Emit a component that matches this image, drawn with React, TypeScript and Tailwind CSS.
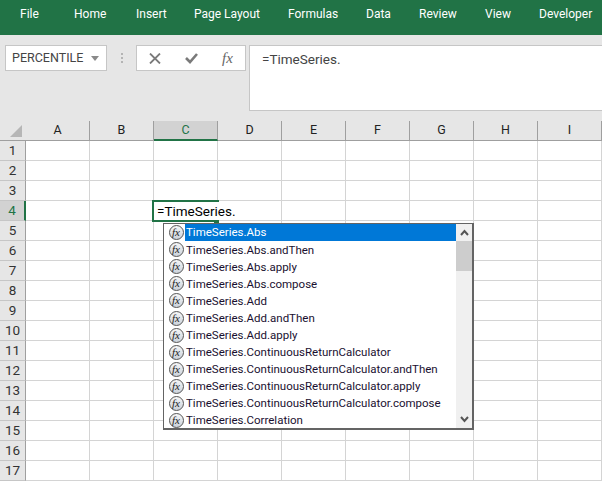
const tabs = [
  { label: 'File', width: 'w-[54px]' },
  { label: 'Home', width: 'w-[62px]' },
  { label: 'Insert', width: 'w-[58px]' },
  { label: 'Page Layout', width: 'w-[94px]' },
  { label: 'Formulas', width: 'w-[78px]' },
  { label: 'Data', width: 'w-[53px]' },
  { label: 'Review', width: 'w-[66px]' },
  { label: 'View', width: 'w-[54px]' },
  { label: 'Developer', width: 'w-[53px]' },
]
const columns = ['A', 'B', 'C', 'D', 'E', 'F', 'G', 'H', 'I']
const rows = Array.from({ length: 17 }, (_, i) => i + 1)
const suggestions = [
  'TimeSeries.Abs',
  'TimeSeries.Abs.andThen',
  'TimeSeries.Abs.apply',
  'TimeSeries.Abs.compose',
  'TimeSeries.Add',
  'TimeSeries.Add.andThen',
  'TimeSeries.Add.apply',
  'TimeSeries.ContinuousReturnCalculator',
  'TimeSeries.ContinuousReturnCalculator.andThen',
  'TimeSeries.ContinuousReturnCalculator.apply',
  'TimeSeries.ContinuousReturnCalculator.compose',
  'TimeSeries.Correlation',
]

function FxBadge() {
  return (
    <div className="flex h-[15px] w-[15px] shrink-0 items-center justify-center rounded-full border border-[#555] bg-gradient-to-b from-[#f6f6f6] to-[#cbd2da] pr-px font-['Liberation_Serif',serif] text-[11px] leading-none text-[#222] italic">
      fx
    </div>
  )
}

function Ribbon() {
  return (
    <div className="flex h-[86px] items-start bg-[#e6e6e6] pt-[10px] pl-[5px]">
      <div className="flex h-[26px] w-[102px] items-center border border-[#c6c6c6] bg-white pr-[7px] pl-[6px] text-[12.5px] text-[#444]">
        <span className="flex-1">PERCENTILE</span>
        <svg width="8" height="5" viewBox="0 0 8 5">
          <path d="M0 0h8L4 5z" fill="#8a8a8a" />
        </svg>
      </div>
      <div className="ml-[14px] flex h-[26px] w-[3px] flex-col justify-center gap-[2px]">
        <div className="h-[2px] w-[2px] bg-[#b4b4b4]" />
        <div className="h-[2px] w-[2px] bg-[#b4b4b4]" />
        <div className="h-[2px] w-[2px] bg-[#b4b4b4]" />
      </div>
      <div className="ml-[12px] flex h-[26px] w-[110px] items-center border border-[#c6c6c6] bg-white pl-[12px]">
        <svg width="12" height="11" viewBox="0 0 12 11">
          <path d="M1 .5l10 10M11 .5l-10 10" stroke="#7a7a7a" strokeWidth="1.8" fill="none" />
        </svg>
        <svg className="ml-[24px]" width="13" height="11" viewBox="0 0 13 11">
          <path d="M1 5l4 4 7-8" stroke="#7a7a7a" strokeWidth="2.6" fill="none" />
        </svg>
        <span className="ml-[24px] font-['Liberation_Serif',serif] text-[15px] leading-none text-[#666] italic">fx</span>
      </div>
      <div className="ml-[3px] h-[66px] flex-1 border-y border-l border-[#c6c6c6] bg-white pt-[3px] pl-[12px] text-[13.5px] text-[#444]">
        =TimeSeries.
      </div>
    </div>
  )
}

function ColumnHeader() {
  return (
    <div className="flex h-[20px] bg-[#e6e6e6] text-[12.5px] text-[#222]">
      <div className="w-[26px] shrink-0 border-b border-[#9f9f9f] pt-[4px] pl-[10px]">
        <svg className="block" width="12" height="12" viewBox="0 0 12 12">
          <path d="M12 0v12H0z" fill="#b6b6b6" />
        </svg>
      </div>
      {columns.map((c) => (
        <div
          key={c}
          className={
            c === 'C'
              ? 'flex w-[64px] shrink-0 items-center justify-center border-r border-b-2 border-r-[#9f9f9f] border-b-[#217346] bg-[#d2d2d2] text-[#217346]'
              : 'flex w-[64px] shrink-0 items-center justify-center border-r border-b border-[#9f9f9f]'
          }
        >
          {c}
        </div>
      ))}
    </div>
  )
}

function SheetRow({ n }: { n: number }) {
  const active = n === 4
  return (
    <div className="flex h-[20px]">
      <div
        className={
          active
            ? 'flex w-[26px] shrink-0 items-center justify-center border-r-2 border-b border-r-[#217346] border-b-[#c6c6c6] bg-[#d2d2d2] text-[13.5px] text-[#217346]'
            : 'flex w-[26px] shrink-0 items-center justify-center border-r border-b border-r-[#9f9f9f] border-b-[#c6c6c6] bg-[#e6e6e6] text-[13.5px] text-[#333]'
        }
      >
        {n}
      </div>
      {columns.map((c) => (
        <div key={c} className="w-[64px] shrink-0 border-r border-b border-[#d4d4d4] bg-white" />
      ))}
    </div>
  )
}

function ActiveCell() {
  return (
    <div className="absolute top-[200px] left-[152px] z-10 h-[22px] w-[67px] border-t-2 border-l-2 border-[#217346] bg-white">
      <div className="absolute -top-px left-[3px] whitespace-nowrap text-[13.5px] leading-[20px] text-black">=TimeSeries.</div>
      <div className="absolute right-[5px] bottom-0 left-0 h-[2px] bg-[#217346]" />
      <div className="absolute right-0 -bottom-[3px] h-[5px] w-[5px] bg-[#217346]" />
    </div>
  )
}

function Suggestions() {
  return (
    <div className="absolute top-[223px] left-[163px] z-20 flex h-[207px] w-[311px] border border-r-2 border-b-2 border-[#646464] bg-white text-[11.5px] text-[#1a1030]">
      <div className="flex-1">
        {suggestions.map((s, i) => (
          <div key={s} className="flex h-[17.1px] items-center pl-[5px]">
            <FxBadge />
            <div className={i === 0 ? 'ml-px flex h-full flex-1 items-center bg-[#0078d7] pt-px pl-px text-white' : 'ml-px pt-px pl-px'}>{s}</div>
          </div>
        ))}
      </div>
      <div className="flex w-[16px] flex-col bg-[#f0f0f0]">
        <div className="flex h-[17px] items-center justify-center">
          <svg width="9" height="7" viewBox="0 0 9 7">
            <path d="M1 6l3.5-4L8 6" stroke="#555" strokeWidth="2" fill="none" />
          </svg>
        </div>
        <div className="h-[30px] bg-[#cdcdcd]" />
        <div className="flex flex-1 items-end justify-center pb-[5px]">
          <svg width="9" height="7" viewBox="0 0 9 7">
            <path d="M1 1l3.5 4L8 1" stroke="#555" strokeWidth="2" fill="none" />
          </svg>
        </div>
      </div>
    </div>
  )
}

export default function App() {
  return (
    <div className="relative h-[481px] w-[602px] overflow-hidden bg-white font-['Roboto',sans-serif]">
      <div className="flex h-[35px] bg-[#217346] pt-[5px] pl-[20px] text-[12px] whitespace-nowrap text-white">
        {tabs.map((t) => (
          <span key={t.label} className={t.width}>
            {t.label}
          </span>
        ))}
      </div>
      <Ribbon />
      <ColumnHeader />
      {rows.map((n) => (
        <SheetRow key={n} n={n} />
      ))}
      <ActiveCell />
      <Suggestions />
    </div>
  )
}
